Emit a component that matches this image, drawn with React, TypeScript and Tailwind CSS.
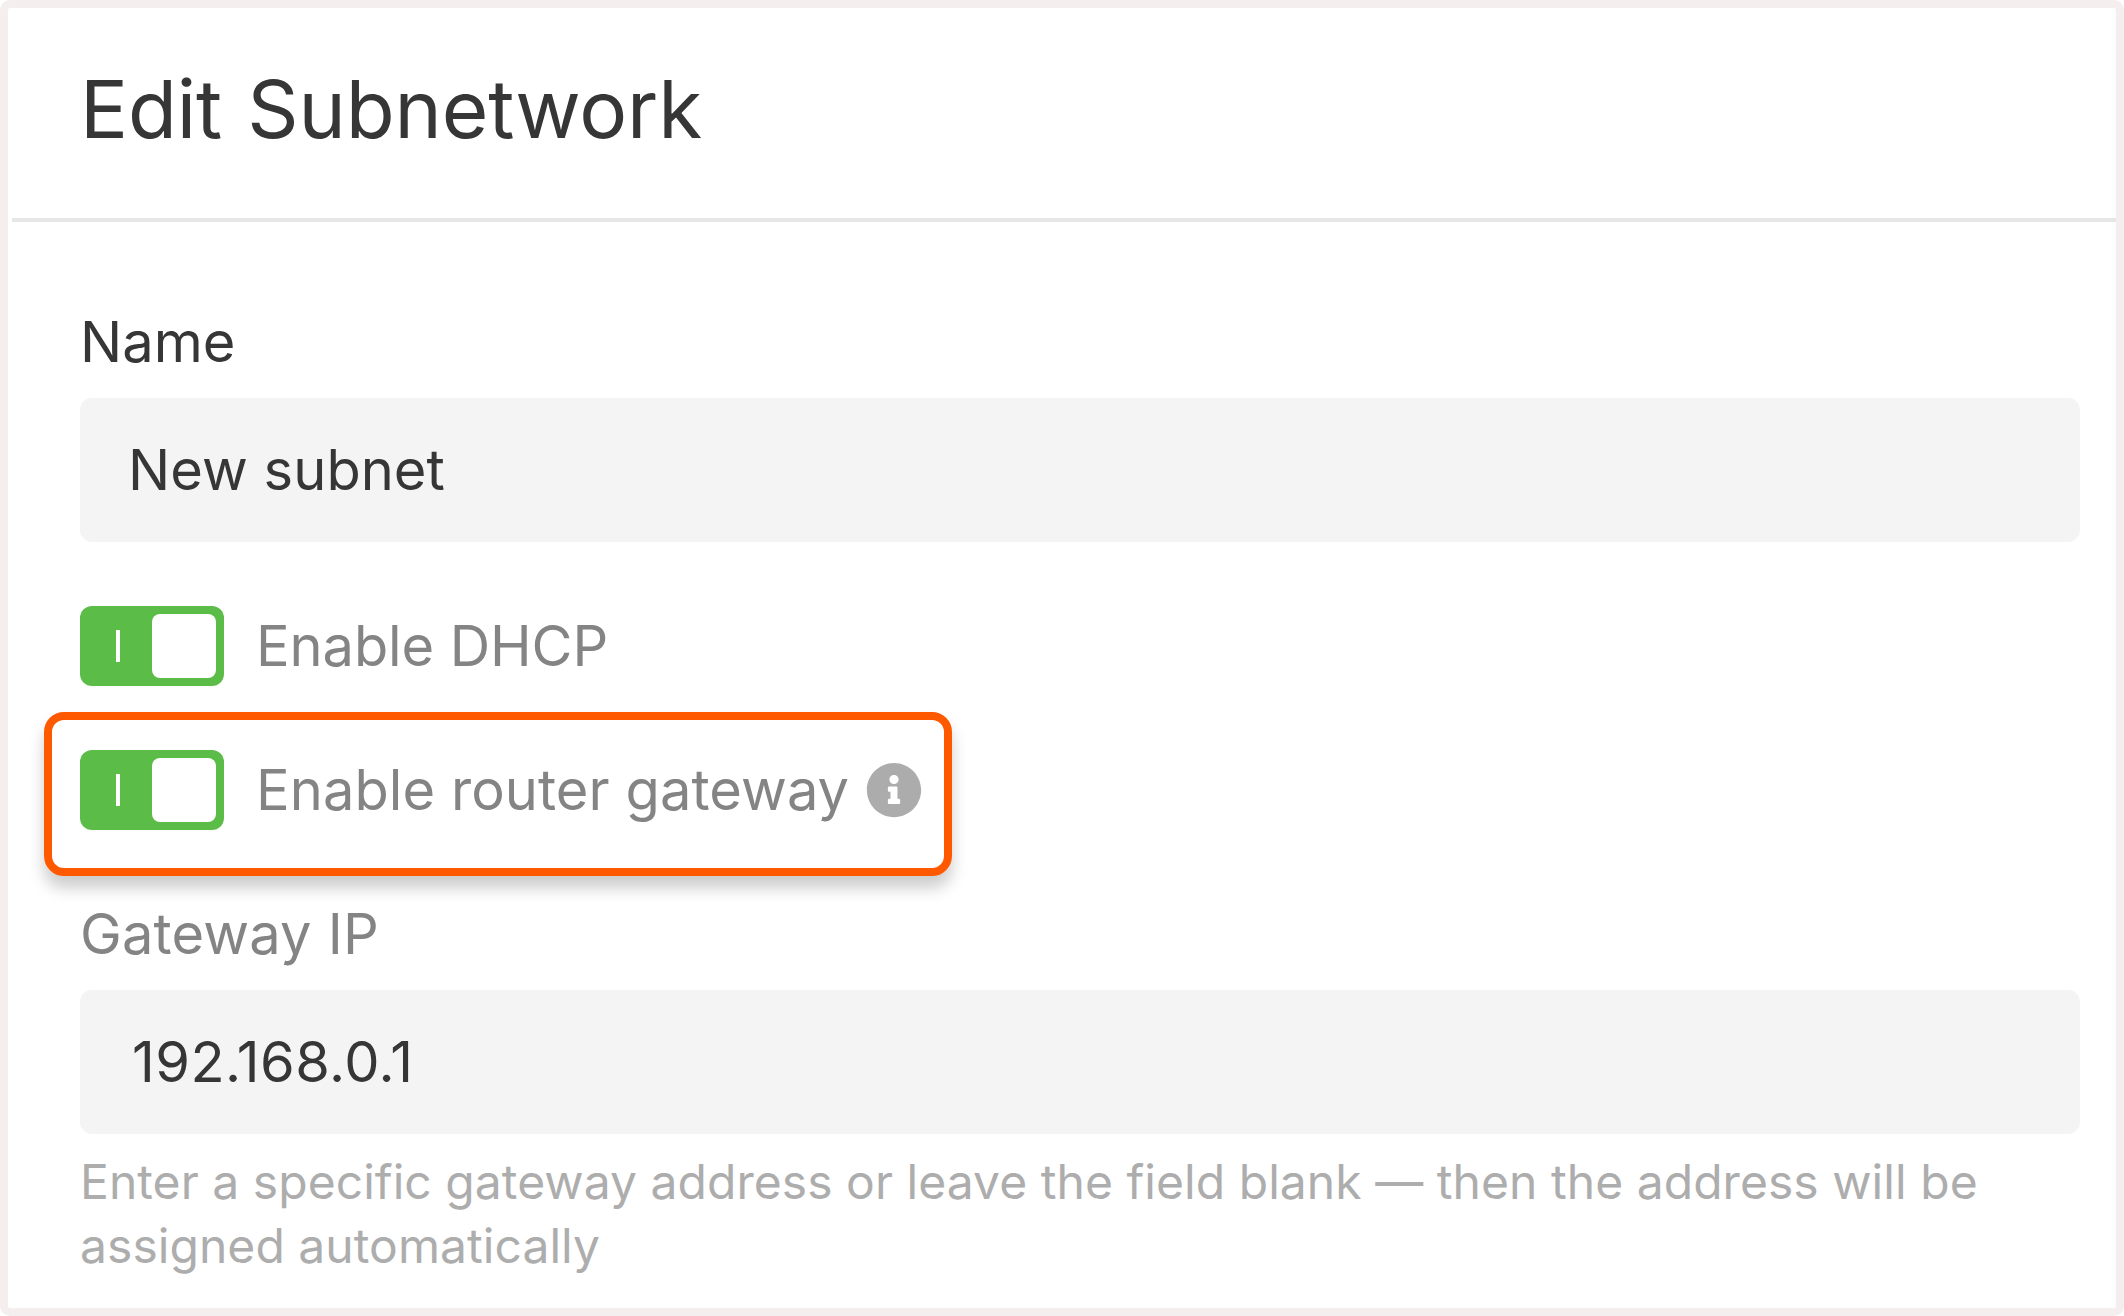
import { useState } from 'react';
import { FaInfoCircle } from 'react-icons/fa';

export default function App() {
  const [name, setName] = useState('New subnet');
  const [dhcp, setDhcp] = useState(true);
  const [router, setRouter] = useState(true);
  const [gatewayIp, setGatewayIp] = useState('192.168.0.1');

  return (
    <div className="min-h-screen bg-white">
      <div className="flex h-[1316px] w-[2124px] flex-col rounded-[10px] border-8 border-[#f4eeee] bg-white font-['Inter',sans-serif] text-[#363636]">
        <header className="ml-1 h-[214px] border-b-4 border-[#e6e6e6] pt-[53px] pl-[68px]">
          <h1 className="text-[80px] leading-[96px] tracking-[-0.15px] [word-spacing:3px]">
            Edit Subnetwork
          </h1>
        </header>

        <main className="flex flex-col gap-16 pt-20 pr-9 pl-[72px] text-[56px] leading-[80px]">
          <label className="flex flex-col gap-4">
            <span>Name</span>
            <input
              className="h-36 rounded-xl bg-[#f4f4f4] px-12 tracking-[0.05px] outline-none"
              value={name}
              onChange={(e) => setName(e.target.value)}
            />
          </label>

          <div className="flex items-center gap-8">
            <Toggle checked={dhcp} onChange={setDhcp} />
            <span className="tracking-[-0.1px] text-[#848484]">
              Enable DHCP
            </span>
          </div>

          <div className="relative flex items-center gap-8">
            <Toggle checked={router} onChange={setRouter} />
            <span className="flex items-center gap-[17px] tracking-[0.07px] text-[#848484]">
              Enable router gateway
              <FaInfoCircle size={56} className="text-[#acacac]" />
            </span>
            {/* highlight frame */}
            <div className="pointer-events-none absolute -top-[38px] -left-9 h-[164px] w-[908px] rounded-[20px] border-8 border-[#ff5900] shadow-[0_12px_16px_rgba(0,0,0,0.2)]" />
          </div>

          <label className="flex flex-col gap-4">
            <span className="tracking-[0.17px] text-[#848484]">Gateway IP</span>
            <input
              className="h-36 rounded-xl bg-[#f4f4f4] pr-12 pl-[52px] tracking-[0.45px] outline-none"
              value={gatewayIp}
              onChange={(e) => setGatewayIp(e.target.value)}
            />
            <span className="text-5xl leading-[64px] tracking-[0.05px] text-[#adadad]">
              Enter a specific gateway address or leave the field blank — then
              the address will be assigned automatically
            </span>
          </label>
        </main>
      </div>
    </div>
  );
}

function Toggle({
  checked,
  onChange,
}: {
  checked: boolean;
  onChange: (value: boolean) => void;
}) {
  return (
    <button
      type="button"
      role="switch"
      aria-checked={checked}
      onClick={() => onChange(!checked)}
      className={`flex h-20 w-36 items-center justify-between rounded-xl p-2 ${
        checked ? 'bg-[#5bbd48]' : 'flex-row-reverse bg-[#acacac]'
      }`}
    >
      <span className="ml-7 h-8 w-1 bg-white" />
      <span className="size-16 rounded-lg bg-white" />
    </button>
  );
}
